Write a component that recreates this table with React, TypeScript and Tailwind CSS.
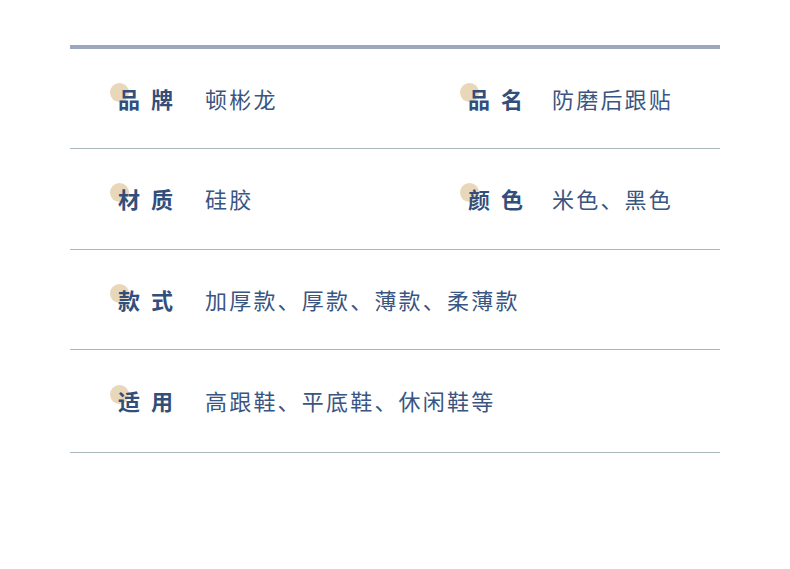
import React from "react";

type Item = { label: [string, string]; value: string };

const rows: { h: string; items: Item[] }[] = [
  {
    h: "h-[100px]",
    items: [
      { label: ["品", "牌"], value: "顿彬龙" },
      { label: ["品", "名"], value: "防磨后跟贴" },
    ],
  },
  {
    h: "h-[101px]",
    items: [
      { label: ["材", "质"], value: "硅胶" },
      { label: ["颜", "色"], value: "米色、黑色" },
    ],
  },
  {
    h: "h-[100px]",
    items: [{ label: ["款", "式"], value: "加厚款、厚款、薄款、柔薄款" }],
  },
  {
    h: "h-[103px]",
    items: [{ label: ["适", "用"], value: "高跟鞋、平底鞋、休闲鞋等" }],
  },
];

function Cell({ item, first }: { item: Item; first: boolean }) {
  return (
    <div
      className={`flex items-center pl-[48px] ${
        first ? "w-[350px] shrink-0" : "flex-1"
      }`}
    >
      <div className={`relative shrink-0 ${first ? "w-[87px]" : "w-[84px]"}`}>
        <span className="absolute -left-[8px] -top-[4px] w-[19px] h-[19px] rounded-full bg-[#e8d7b8]" />
        <span className="relative flex gap-[11px] text-[22px] font-bold leading-none text-[#324e7a]">
          <span>{item.label[0]}</span>
          <span>{item.label[1]}</span>
        </span>
      </div>
      <span className="text-[22px] leading-none tracking-[2.2px] text-[#3a5581] whitespace-nowrap">
        {item.value}
      </span>
    </div>
  );
}

export default function App() {
  return (
    <div
      className="w-[790px] h-[569px] bg-white pt-[45px]"
      style={{ fontFamily: '"Noto Sans CJK SC", "Noto Sans", sans-serif' }}
    >
      <div className="ml-[70px] w-[650px] border-t-4 border-[#9ca7c1]">
        {rows.map((row, i) => (
          <div
            key={i}
            className={`flex items-center pb-[2px] border-b border-[#aab6bc] ${row.h}`}
          >
            {row.items.map((it, j) => (
              <Cell key={j} item={it} first={j === 0} />
            ))}
          </div>
        ))}
      </div>
    </div>
  );
}
